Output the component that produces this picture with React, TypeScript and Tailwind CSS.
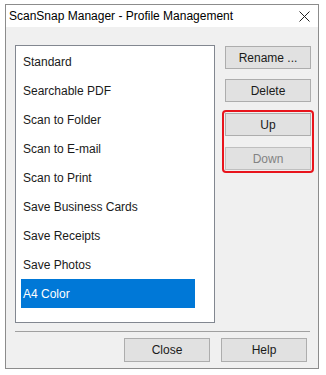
import React from 'react';

const profiles = [
  'Standard',
  'Searchable PDF',
  'Scan to Folder',
  'Scan to E-mail',
  'Scan to Print',
  'Save Business Cards',
  'Save Receipts',
  'Save Photos',
  'A4 Color',
];

const btn =
  'flex h-[23px] w-[86px] items-center justify-center border border-[#adadad] bg-[#e1e1e1] text-[12px] text-[#1a1a1a]';

export default function App() {
  return (
    <div className="h-[375px] w-[326px] bg-white pl-[5px] pt-[4px] font-['Liberation_Sans',Arial,sans-serif]">
      <div className="flex h-[365px] w-[314px] flex-col border border-[#8c8c8c] bg-[#f0f0f0]">
        {/* title bar */}
        <div className="flex h-[22px] items-center justify-between bg-white pl-[3px] pr-[8px] text-[12px] text-black">
          <span>ScanSnap Manager - Profile Management</span>
          <svg width="11" height="11" viewBox="0 0 11 11" className="mt-[1px]">
            <path d="M0.5 0.5 L10.5 10.5 M10.5 0.5 L0.5 10.5" stroke="#222" strokeWidth="1" />
          </svg>
        </div>

        <div className="flex pl-[9px] pt-[18px]">
          {/* profile list */}
          <div className="h-[278px] w-[200px] border border-[#828790] bg-white px-[5px] pt-[1px]">
            {profiles.map((p, i) => (
              <div
                key={p}
                className={`flex h-[29px] w-[174px] items-center pl-[2px] text-[12px] ${
                  i === profiles.length - 1 ? 'bg-[#0078d7] text-white' : 'text-[#1a1a1a]'
                }`}
              >
                {p}
              </div>
            ))}
          </div>

          {/* side buttons */}
          <div className="ml-[10px] flex flex-col pt-[1px]">
            <div className={btn}>Rename ...</div>
            <div className={`${btn} mt-[10px]`}>Delete</div>
            <div className="relative mt-[11px] flex flex-col gap-[11px]">
              <div className={btn}>Up</div>
              <div className={`${btn} border-[#bfbfbf] bg-[#cccccc] text-[#838383]`}>Down</div>
              <div className="absolute -left-[3px] -top-[3px] h-[63px] w-[92px] rounded-[4px] border-2 border-[#e8141c]" />
            </div>
          </div>
        </div>

        {/* separator */}
        <div className="ml-[9px] mt-[8px] h-px w-[295px] bg-[#a0a0a0]" />

        {/* footer */}
        <div className="mt-[6px] flex gap-[11px] pl-[118px]">
          <div className={`${btn} h-[24px] border-[#0078d7]`}>Close</div>
          <div className={`${btn} h-[24px]`}>Help</div>
        </div>
      </div>
    </div>
  );
}
